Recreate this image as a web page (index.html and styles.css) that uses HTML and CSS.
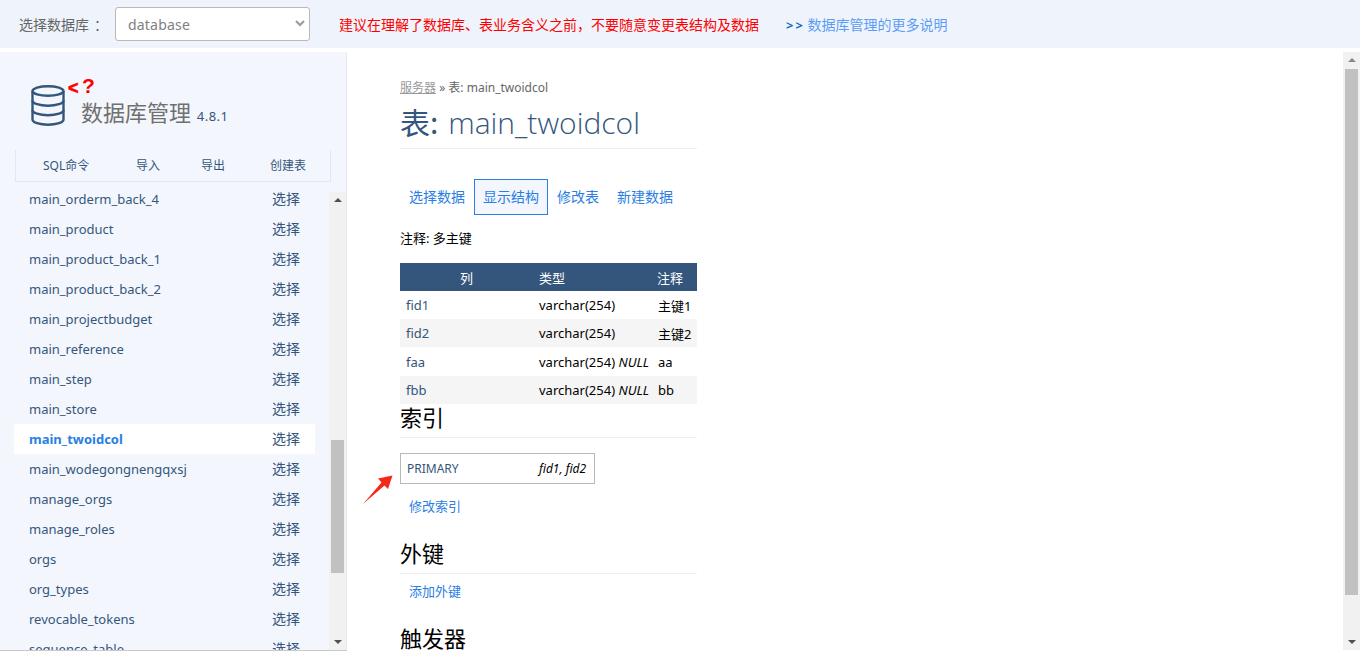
FILE: index.html
```html
<!DOCTYPE html>
<html lang="zh-CN">
<head>
<meta charset="utf-8">
<title>数据库管理</title>
<link rel="stylesheet" href="styles.css">
</head>
<body>
<header class="topbar">
  <label class="db-label" for="db">选择数据库<span class="colon">：</span></label>
  <select class="db-select" id="db"><option>database</option></select>
  <span class="warning">建议在理解了数据库、表业务含义之前，不要随意变更表结构及数据</span>
  <a class="more" href="#"><span class="more-mark">&gt;&gt;</span> 数据库管理的更多说明</a>
</header>
<div class="layout">
  <aside class="sidebar">
    <div class="brand">
      <svg class="brand-icon" width="34" height="41" viewBox="0 0 34 41" fill="none" stroke="#34567c" stroke-width="2.4">
        <ellipse cx="17" cy="6" rx="15.500" ry="4.800"/>
        <path d="M1.500 6V34.500C1.500 37.500 8.500 39.700 17 39.700S32.500 37.500 32.500 34.500V6"/>
        <path d="M1.500 15.500C1.500 18.500 8.500 20.700 17 20.700S32.500 18.500 32.500 15.500"/>
        <path d="M1.500 25C1.500 28 8.500 30.200 17 30.200S32.500 28 32.500 25"/>
      </svg>
      <span class="mark-lt">&lt;</span>
      <span class="mark-q">?</span>
      <h1 class="brand-title">数据库管理 <small class="brand-version">4.8.1</small></h1>
    </div>
    <nav class="tools">
      <a href="#" class="tool tool-sql">SQL命令</a>
      <a href="#" class="tool tool-in">导入</a>
      <a href="#" class="tool tool-out">导出</a>
      <a href="#" class="tool tool-new">创建表</a>
    </nav>
    <div class="list-wrap">
      <ul class="tables">
        <li class="row"><a href="#" class="name">main_orderm_back_4</a><a href="#" class="pick">选择</a></li>
        <li class="row"><a href="#" class="name">main_product</a><a href="#" class="pick">选择</a></li>
        <li class="row"><a href="#" class="name">main_product_back_1</a><a href="#" class="pick">选择</a></li>
        <li class="row"><a href="#" class="name">main_product_back_2</a><a href="#" class="pick">选择</a></li>
        <li class="row"><a href="#" class="name">main_projectbudget</a><a href="#" class="pick">选择</a></li>
        <li class="row"><a href="#" class="name">main_reference</a><a href="#" class="pick">选择</a></li>
        <li class="row"><a href="#" class="name">main_step</a><a href="#" class="pick">选择</a></li>
        <li class="row"><a href="#" class="name">main_store</a><a href="#" class="pick">选择</a></li>
        <li class="row row-active"><a href="#" class="name">main_twoidcol</a><a href="#" class="pick">选择</a></li>
        <li class="row"><a href="#" class="name">main_wodegongnengqxsj</a><a href="#" class="pick">选择</a></li>
        <li class="row"><a href="#" class="name">manage_orgs</a><a href="#" class="pick">选择</a></li>
        <li class="row"><a href="#" class="name">manage_roles</a><a href="#" class="pick">选择</a></li>
        <li class="row"><a href="#" class="name">orgs</a><a href="#" class="pick">选择</a></li>
        <li class="row"><a href="#" class="name">org_types</a><a href="#" class="pick">选择</a></li>
        <li class="row"><a href="#" class="name">revocable_tokens</a><a href="#" class="pick">选择</a></li>
        <li class="row"><a href="#" class="name">sequence_table</a><a href="#" class="pick">选择</a></li>
      </ul>
      <div class="scrollbar side-scroll">
        <span class="arrow-up"></span>
        <div class="track side-track"><div class="thumb side-thumb"></div></div>
        <span class="arrow-down"></span>
      </div>
    </div>
  </aside>
  <main class="main">
    <div class="content">
      <p class="crumbs"><a href="#" class="crumb-link">服务器</a> » 表: main_twoidcol</p>
      <h2 class="page-title"><span class="title-cjk">表:</span> main_twoidcol</h2>
      <nav class="tabs">
        <a href="#" class="tab">选择数据</a>
        <a href="#" class="tab tab-active">显示结构</a>
        <a href="#" class="tab">修改表</a>
        <a href="#" class="tab">新建数据</a>
      </nav>
      <p class="note">注释: 多主键</p>
      <table class="cols">
        <thead>
          <tr><th class="c1">列</th><th class="c2">类型</th><th class="c3">注释</th></tr>
        </thead>
        <tbody>
          <tr><td class="field">fid1</td><td>varchar(254)</td><td>主键1</td></tr>
          <tr class="alt"><td class="field">fid2</td><td>varchar(254)</td><td>主键2</td></tr>
          <tr class="tall"><td class="field">faa</td><td>varchar(254) <i>NULL</i></td><td>aa</td></tr>
          <tr class="alt"><td class="field">fbb</td><td>varchar(254) <i>NULL</i></td><td>bb</td></tr>
        </tbody>
      </table>
      <h3 class="section section-index">索引</h3>
      <div class="index-wrap">
        <div class="index-box"><span class="index-name">PRIMARY</span><i class="index-cols">fid1, fid2</i></div>
        <svg class="pointer" width="30" height="30" viewBox="0 0 30 30"><path d="M0 29L18.500 7.500L15 3.500L29.500 .5L25 14L21.500 10.500Z" fill="#f5281c"/></svg>
      </div>
      <a href="#" class="action action-index">修改索引</a>
      <h3 class="section section-fk">外键</h3>
      <a href="#" class="action action-fk">添加外键</a>
      <h3 class="section section-trg">触发器</h3>
    </div>
    <div class="scrollbar main-scroll">
      <span class="arrow-up"></span>
      <div class="track main-track"><div class="thumb main-thumb"></div></div>
      <span class="arrow-down"></span>
    </div>
  </main>
</div>
</body>
</html>
```
FILE: styles.css
```css
* { box-sizing: border-box; }
html, body { margin: 0; height: 655px; overflow: hidden; background: #fff; }
body { font-family: "Noto Sans", "Noto Sans CJK SC", sans-serif; font-size: 13px; color: #000; }
a { text-decoration: none; }
h1, h2, h3, p, ul { margin: 0; padding: 0; }
ul { list-style: none; }

.topbar { height: 48px; background: #eff4fc; display: flex; align-items: center; padding-left: 19px; margin-bottom: 4px; }
.db-label { width: 96px; font-size: 14px; color: #666; white-space: nowrap; }
.colon { margin-left: 5px; }
.db-select { width: 195px; height: 34px; margin-bottom: 1px; border: 1px solid #b9b9b9; border-radius: 3px; color: #808080; font: 14px "Noto Sans", sans-serif; letter-spacing: .2px; padding: 2px 0 0 12px; appearance: none; -webkit-appearance: none; background: #fff url("data:image/svg+xml,%3Csvg xmlns='http://www.w3.org/2000/svg' width='10' height='7'%3E%3Cpath d='M1 1l4 4 4-4' fill='none' stroke='%23999' stroke-width='2'/%3E%3C/svg%3E") no-repeat right 4px center; }
.warning { margin-left: 29px; width: 447px; color: #f00; font-size: 14px; white-space: nowrap; }
.more { color: #5b9df6; font-size: 14px; white-space: nowrap; }
.more-mark { color: #0a67c4; font-size: 13px; font-weight: 700; letter-spacing: 2px; margin-right: -1px; }

.layout { display: flex; height: 599px; }
.sidebar { width: 347px; flex: none; height: 599px; background: #f3f7fd; border-right: 1px solid #e1eaf5; border-bottom: 1px solid #c9c9c9; display: flex; flex-direction: column; overflow: hidden; }
.brand { position: relative; height: 98px; flex: none; padding: 33px 0 0 31px; display: flex; }
.brand-icon { flex: none; }
.mark-lt { position: absolute; left: 68px; top: 27px; color: #f00; font: 700 18px/18px "Liberation Sans", sans-serif; -webkit-text-stroke: .6px #f00; }
.mark-q { position: absolute; left: 82px; top: 23px; color: #f00; font: 700 21px/21px "Liberation Sans", sans-serif; }
.brand-title { margin: 11px 0 0 16px; font-size: 22px; line-height: 32px; font-weight: 400; color: #707070; white-space: nowrap; }
.brand-version { font-size: 13px; color: #34567c; letter-spacing: .5px; }

.tools { flex: none; margin-left: 15px; width: 316px; height: 32px; padding-bottom: 2px; border: 1px solid #dfe8f4; border-top: 0; display: flex; align-items: center; font-size: 12px; }
.tool { color: #34567c; white-space: nowrap; }
.tool-sql { margin-left: 27px; width: 93px; }
.tool-in { width: 65px; }
.tool-out { width: 69px; }

.list-wrap { flex: 1; min-height: 0; display: flex; padding-top: 2px; }
.tables { width: 329px; flex: none; height: 466px; overflow: hidden; padding: 0 14px; }
.row { height: 30px; display: flex; align-items: center; justify-content: space-between; padding: 0 15px; }
.row-active { background: #fff; }
.row-active .name { color: #2a7ee4; font-weight: 700; }
.name { color: #34567c; white-space: nowrap; }
.pick { color: #34567c; font-size: 14px; line-height: 20px; margin-bottom: 1px; }

.scrollbar { width: 17px; flex: none; background: #f1f1f1; display: flex; flex-direction: column; align-items: center; }
.side-scroll { margin-top: 8px; height: 458px; }
.arrow-up, .arrow-down { flex: none; width: 0; height: 0; border: 4px solid transparent; }
.arrow-up { margin: 6px 0 7px; border-top: 0; border-bottom: 4px solid #505050; }
.arrow-down { margin: 7px 0 6px; border-bottom: 0; border-top: 4px solid #505050; }
.track { flex: 1; width: 13px; min-height: 0; }
.thumb { width: 13px; background: #c1c1c1; }
.side-thumb { margin-top: 231px; height: 133px; }

.main { flex: 1; min-width: 0; display: flex; height: 598px; overflow: hidden; }
.content { flex: 1; min-width: 0; padding: 26px 0 0 53px; overflow: hidden; }
.content > * { width: 297px; }
.main-scroll { height: 598px; }
.main-scroll .arrow-up { border-bottom-color: #8a8a8a; }
.main-thumb { height: 526px; }

.crumbs { height: 20px; line-height: 20px; font-size: 12px; color: #666; white-space: nowrap; }
.crumb-link { color: #999; text-decoration: underline; }
.page-title { height: 51px; border-bottom: 1px solid #eee; font-size: 30px; line-height: 47px; font-weight: 300; color: #34567c; font-family: "Open Sans", "Noto Sans CJK SC", sans-serif; white-space: nowrap; }
.title-cjk { font-family: "Noto Sans CJK SC", sans-serif; font-weight: 400; margin-right: 2px; }

.tabs { display: flex; margin-top: 30px; height: 36px; align-items: center; font-size: 14px; }
.tab { width: 74px; height: 36px; line-height: 34px; text-align: center; color: #2a7ee4; border: 1px solid transparent; white-space: nowrap; }
.tab-active { background: #f3f7fd; border-color: #2a7ee4; }
.tab:nth-child(3) { width: 60px; }

.note { margin-top: 14px; height: 20px; line-height: 18px; }

.cols { margin-top: 14px; border-collapse: collapse; table-layout: fixed; width: 297px; }
.cols th { height: 28px; background: #34567c; color: #fff; font-weight: 400; text-align: left; padding: 0 6px; }
.cols th.c1 { text-align: center; }
.cols th.c3 { padding-left: 5px; }
.cols .c1 { width: 133px; }
.cols .c2 { width: 119px; }
.cols td { height: 28px; padding: 0 6px; white-space: nowrap; }
.cols td:nth-child(2) { padding-right: 0; }
.cols td:nth-child(3) { padding-right: 0; }
.cols .tall td { height: 29px; }
.cols .alt td { background: #f5f5f5; }
.field { color: #34567c; }

.section { font-size: 22px; font-weight: 400; line-height: 26px; border-bottom: 1px solid #eee; }
.section-index { height: 34px; }
.section-fk { margin-top: 24px; height: 34px; }
.section-trg { margin-top: 24px; border: 0; height: 30px; }

.index-wrap { position: relative; margin-top: 15px; height: 31px; }
.index-box { width: 195px; height: 31px; border: 1px solid #b9b9b9; display: flex; align-items: center; padding-left: 6px; font-size: 12px; }
.index-name { width: 132px; color: #34567c; }
.index-cols { white-space: nowrap; }
.pointer { position: absolute; left: -37px; top: 22px; }

.action { display: block; padding-left: 9px; height: 20px; line-height: 20px; color: #2a7ee4; white-space: nowrap; }
.action-index { margin-top: 12px; }
.action-fk { margin-top: 7px; }
```
